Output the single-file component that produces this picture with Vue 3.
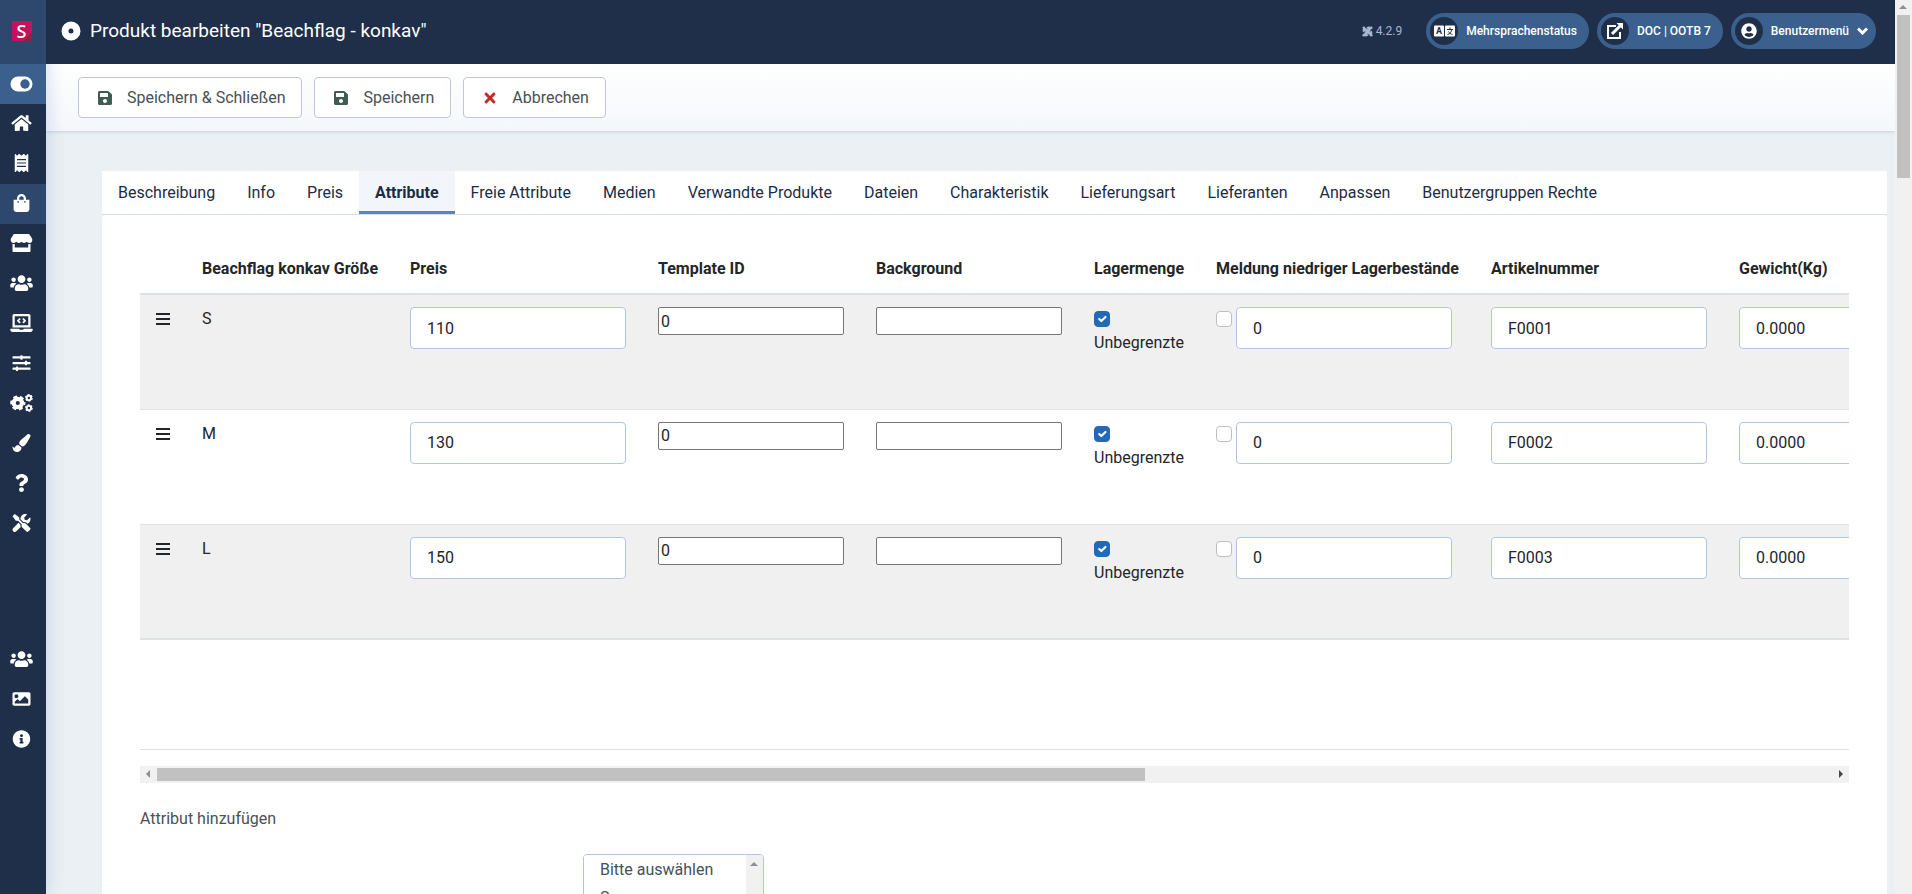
<script setup>
import { ref } from 'vue'

const glyphs = {
  home: ['0 0 576 512', 'M280.37 148.26L96 300.11V464a16 16 0 0 0 16 16l112.06-.29a16 16 0 0 0 15.92-16V368a16 16 0 0 1 16-16h64a16 16 0 0 1 16 16v95.64a16 16 0 0 0 16 16.05L464 480a16 16 0 0 0 16-16V300L295.67 148.26a12.19 12.19 0 0 0-15.3 0zM571.6 251.47L488 182.56V44.05a12 12 0 0 0-12-12h-56a12 12 0 0 0-12 12v72.61L318.47 43a48 48 0 0 0-61 0L4.34 251.47a12 12 0 0 0-1.6 16.9l25.5 31A12 12 0 0 0 45.15 301l235.22-193.74a12.19 12.19 0 0 1 15.3 0L530.9 301a12 12 0 0 0 16.9-1.6l25.5-31a12 12 0 0 0-1.7-16.93z'],
  receipt: ['0 0 384 512', 'M358.4 3.2L320 48 265.6 3.2a15.9 15.9 0 0 0-19.2 0L192 48 137.6 3.2a15.9 15.9 0 0 0-19.2 0L64 48 25.6 3.2C15-4.7 0 2.8 0 16v480c0 13.2 15 20.7 25.6 12.8L64 464l54.4 44.8a15.9 15.9 0 0 0 19.2 0L192 464l54.4 44.8a15.9 15.9 0 0 0 19.2 0L320 464l38.4 44.8c10.5 7.9 25.6.4 25.6-12.8V16c0-13.2-15-20.7-25.6-12.8zM320 360c0 4.4-3.6 8-8 8H72c-4.4 0-8-3.6-8-8v-16c0-4.4 3.6-8 8-8h240c4.4 0 8 3.6 8 8v16zm0-96c0 4.4-3.6 8-8 8H72c-4.4 0-8-3.6-8-8v-16c0-4.4 3.6-8 8-8h240c4.4 0 8 3.6 8 8v16zm0-96c0 4.4-3.6 8-8 8H72c-4.4 0-8-3.6-8-8v-16c0-4.4 3.6-8 8-8h240c4.4 0 8 3.6 8 8v16z'],
  bag: ['0 0 448 512', 'M352 160v-32C352 57.42 294.579 0 224 0 153.42 0 96 57.42 96 128v32H0v272c0 44.183 35.817 80 80 80h288c44.183 0 80-35.817 80-80V160h-96zm-192-32c0-35.29 28.71-64 64-64s64 28.71 64 64v32H160v-32zm160 120c-13.255 0-24-10.745-24-24s10.745-24 24-24 24 10.745 24 24-10.745 24-24 24zm-192 0c-13.255 0-24-10.745-24-24s10.745-24 24-24 24 10.745 24 24-10.745 24-24 24z'],
  store: ['0 0 616 512', 'M602 118.6L537.1 15C531.3 5.7 521 0 510 0H106C95 0 84.7 5.7 78.9 15L14 118.6c-33.5 53.5-3.8 127.9 58.8 136.4 4.5.6 9.1.9 13.7.9 29.6 0 55.8-13 73.8-33.1 18 20.1 44.3 33.1 73.8 33.1 29.6 0 55.8-13 73.8-33.1 18 20.1 44.3 33.1 73.8 33.1 29.6 0 55.8-13 73.8-33.1 18.1 20.1 44.3 33.1 73.8 33.1 4.7 0 9.2-.3 13.7-.9 62.8-8.4 92.6-82.8 59-136.4zM529.5 288c-10 0-19.9-1.5-29.5-3.8V384H116v-99.8c-9.6 2.2-19.5 3.8-29.5 3.8-6 0-12.1-.4-18-1.2-5.6-.8-11.1-2.1-16.4-3.6V480c0 17.7 14.3 32 32 32h448c17.7 0 32-14.3 32-32V283.2c-5.4 1.6-10.8 2.9-16.4 3.6-6.1.8-12.1 1.2-18.2 1.2z'],
  users: ['0 0 640 512', 'M96 224c35.3 0 64-28.7 64-64s-28.7-64-64-64-64 28.7-64 64 28.7 64 64 64zm448 0c35.3 0 64-28.7 64-64s-28.7-64-64-64-64 28.7-64 64 28.7 64 64 64zm32 32h-64c-17.6 0-33.5 7.1-45.1 18.6 40.3 22.1 68.9 62 75.1 109.4h66c17.7 0 32-14.3 32-32v-32c0-35.3-28.7-64-64-64zm-256 0c61.9 0 112-50.1 112-112S381.9 32 320 32 208 82.1 208 144s50.1 112 112 112zm76.8 32h-8.3c-20.8 10-43.9 16-68.5 16s-47.6-6-68.5-16h-8.3C179.6 288 128 339.6 128 403.2V432c0 26.5 21.5 48 48 48h288c26.5 0 48-21.5 48-48v-28.8c0-63.6-51.6-115.2-115.2-115.2zm-223.7-13.4C161.5 263.1 145.6 256 128 256H64c-35.3 0-64 28.7-64 64v32c0 17.7 14.3 32 32 32h65.9c6.3-47.4 34.9-87.3 75.2-109.4z'],
  laptop: ['0 0 640 512', 'M255.03 261.65c6.25 6.25 16.38 6.25 22.63 0l11.31-11.31c6.25-6.25 6.25-16.38 0-22.63L253.25 192l35.71-35.72c6.25-6.25 6.25-16.38 0-22.63l-11.31-11.31c-6.25-6.25-16.38-6.25-22.63 0l-58.34 58.34c-6.25 6.25-6.25 16.38 0 22.63l58.35 58.34zm96.01-11.3l11.31 11.31c6.25 6.25 16.38 6.25 22.63 0l58.34-58.34c6.25-6.25 6.25-16.38 0-22.63l-58.34-58.34c-6.25-6.25-16.38-6.25-22.63 0l-11.31 11.31c-6.25 6.25-6.25 16.38 0 22.63L386.75 192l-35.71 35.72c-6.25 6.25-6.25 16.38 0 22.63zM624 416H381.54c-.74 19.81-14.71 32-32.74 32H288c-18.69 0-33.02-17.47-32.77-32H16c-8.8 0-16 7.2-16 16v16c0 35.2 28.8 64 64 64h512c35.2 0 64-28.8 64-64v-16c0-8.8-7.2-16-16-16zM576 48c0-26.4-21.6-48-48-48H112C85.6 0 64 21.6 64 48v336h512V48zm-64 272H128V64h384v256z'],
  sliders: ['0 0 512 512', 'M496 384H160v-16c0-8.8-7.2-16-16-16h-32c-8.8 0-16 7.2-16 16v16H16c-8.8 0-16 7.2-16 16v32c0 8.8 7.2 16 16 16h80v16c0 8.8 7.2 16 16 16h32c8.8 0 16-7.2 16-16v-16h336c8.8 0 16-7.2 16-16v-32c0-8.8-7.2-16-16-16zm0-160h-80v-16c0-8.8-7.2-16-16-16h-32c-8.8 0-16 7.2-16 16v16H16c-8.8 0-16 7.2-16 16v32c0 8.8 7.2 16 16 16h336v16c0 8.8 7.2 16 16 16h32c8.8 0 16-7.2 16-16v-16h80c8.8 0 16-7.2 16-16v-32c0-8.8-7.2-16-16-16zm0-160H288V48c0-8.8-7.2-16-16-16h-32c-8.8 0-16 7.2-16 16v16H16C7.2 64 0 71.2 0 80v32c0 8.8 7.2 16 16 16h208v16c0 8.8 7.2 16 16 16h32c8.8 0 16-7.2 16-16v-16h208c8.8 0 16-7.2 16-16V80c0-8.8-7.2-16-16-16z'],
  brush: ['0 0 512 512', 'M167.02 309.34c-40.12 2.58-76.53 17.86-97.19 72.3-2.35 6.21-8 9.98-14.59 9.98-11.11 0-45.46-27.67-55.25-34.35C0 439.62 37.93 512 128 512c75.86 0 128-43.77 128-120.19 0-3.11-.65-6.08-.97-9.13l-88.01-73.34zM457.89 0c-15.16 0-29.37 6.71-40.21 16.45C213.27 199.05 192 203.34 192 257.09c0 13.7 3.25 26.76 8.73 38.7l63.82 53.18c7.21 1.8 14.64 3.03 22.39 3.03 62.11 0 98.11-45.47 211.16-256.46 7.38-14.35 13.9-29.85 13.9-45.99C512 20.64 486 0 457.89 0z'],
  question: ['0 0 384 512', 'M202.021 0C122.202 0 70.503 32.703 29.914 91.026c-7.363 10.58-5.093 25.086 5.178 32.874l43.138 32.709c10.373 7.865 25.132 6.026 33.253-4.148 25.049-31.381 43.63-49.449 82.757-49.449 30.764 0 68.816 19.799 68.816 49.631 0 22.552-18.617 34.134-48.993 51.164-35.423 19.86-82.299 44.576-82.299 106.405V320c0 13.255 10.745 24 24 24h72.471c13.255 0 24-10.745 24-24v-5.773c0-42.86 125.268-44.645 125.268-160.627C377.504 66.256 286.902 0 202.021 0zM192 373.459c-38.196 0-69.271 31.075-69.271 69.271 0 38.195 31.075 69.27 69.271 69.27s69.271-31.075 69.271-69.271-31.075-69.27-69.271-69.27z'],
  tools: ['0 0 512 512', 'M501.1 395.7L384 278.6c-23.1-23.1-57.6-27.6-85.4-13.9L192 158.1V96L64 0 0 64l96 128h62.1l106.6 106.6c-13.6 27.8-9.2 62.3 13.9 85.4l117.1 117.1c14.6 14.6 38.2 14.6 52.7 0l52.7-52.7c14.5-14.6 14.5-38.2 0-52.7zM331.7 225c28.3 0 54.9 11 74.9 31l19.4 19.4c15.8-6.9 30.8-16.5 43.8-29.5 37.1-37.1 49.7-89.3 37.9-136.7-2.2-9-13.5-12.1-20.1-5.5l-74.4 74.4-67.9-11.3L334 98.9l74.4-74.4c6.6-6.6 3.4-17.9-5.7-20.2-47.4-11.7-99.6.9-136.6 37.9-28.5 28.5-41.9 66.1-41.2 103.6l82.1 82.1c8.1-1.9 16.5-2.9 24.7-2.9zm-103.9 82l-56.7-56.7L18.7 402.8c-25 25-25 65.5 0 90.5s65.5 25 90.5 0l123.6-123.6c-7.6-19.9-9.9-41.6-5-62.7z'],
  image: ['0 0 512 512', 'M464 448H48c-26.51 0-48-21.49-48-48V112c0-26.51 21.49-48 48-48h416c26.51 0 48 21.49 48 48v288c0 26.51-21.49 48-48 48zM112 120c-30.928 0-56 25.072-56 56s25.072 56 56 56 56-25.072 56-56-25.072-56-56-56zM64 384h384V272l-87.515-87.515c-4.686-4.686-12.284-4.686-16.971 0L208 320l-55.515-55.515c-4.686-4.686-12.284-4.686-16.971 0L64 336v48z'],
  info: ['0 0 512 512', 'M256 8C119.043 8 8 119.083 8 256c0 136.997 111.043 248 248 248s248-111.003 248-248C504 119.083 392.957 8 256 8zm0 110c23.196 0 42 18.804 42 42s-18.804 42-42 42-42-18.804-42-42 18.804-42 42-42zm56 254c0 6.627-5.373 12-12 12h-88c-6.627 0-12-5.373-12-12v-24c0-6.627 5.373-12 12-12h12v-64h-12c-6.627 0-12-5.373-12-12v-24c0-6.627 5.373-12 12-12h64c6.627 0 12 5.373 12 12v100h12c6.627 0 12 5.373 12 12v24z'],
  save: ['0 0 448 512', 'M433.941 129.941l-83.882-83.882A48 48 0 0 0 316.118 32H48C21.49 32 0 53.49 0 80v352c0 26.51 21.49 48 48 48h352c26.51 0 48-21.49 48-48V163.882a48 48 0 0 0-14.059-33.941zM224 416c-35.346 0-64-28.654-64-64 0-35.346 28.654-64 64-64s64 28.654 64 64c0 35.346-28.654 64-64 64zm96-304.52V212c0 6.627-5.373 12-12 12H76c-6.627 0-12-5.373-12-12V108c0-6.627 5.373-12 12-12h228.52c3.183 0 6.235 1.264 8.485 3.515l3.48 3.48A11.996 11.996 0 0 1 320 111.48z'],
  times: ['0 0 352 512', 'M242.72 256l100.07-100.07c12.28-12.28 12.28-32.19 0-44.48l-22.24-22.24c-12.28-12.28-32.19-12.28-44.48 0L176 189.28 75.93 89.21c-12.28-12.28-32.19-12.28-44.48 0L9.21 111.45c-12.28 12.28-12.28 32.19 0 44.48L109.28 256 9.21 356.07c-12.28 12.28-12.28 32.19 0 44.48l22.24 22.24c12.28 12.28 32.2 12.28 44.48 0L176 322.72l100.07 100.07c12.28 12.28 32.2 12.28 44.48 0l22.24-22.24c12.28-12.28 12.28-32.19 0-44.48L242.72 256z'],
  user: ['0 0 496 512', 'M248 8C111 8 0 119 0 256s111 248 248 248 248-111 248-248S385 8 248 8zm0 96c48.6 0 88 39.4 88 88s-39.4 88-88 88-88-39.4-88-88 39.4-88 88-88zm0 344c-58.7 0-111.3-26.6-146.5-68.2 18.8-35.4 55.6-59.8 98.5-59.8 2.4 0 4.8.4 7.1 1.1 13 4.2 26.6 6.9 40.9 6.9 14.3 0 28-2.7 40.9-6.9 2.3-.7 4.7-1.1 7.1-1.1 42.9 0 79.7 24.4 98.5 59.8C359.3 421.4 306.7 448 248 448z'],
}

const menu = [
  { icon: 'toggle', label: 'Menü umschalten', state: 'switch' },
  { icon: 'home', label: 'Startseite' },
  { icon: 'receipt', label: 'Bestellungen' },
  { icon: 'bag', label: 'Produkte', state: 'active' },
  { icon: 'store', label: 'Shop' },
  { icon: 'users', label: 'Kunden' },
  { icon: 'laptop', label: 'Inhalte' },
  { icon: 'sliders', label: 'Optionen' },
  { icon: 'cogs', label: 'Konfiguration' },
  { icon: 'brush', label: 'Gestaltung' },
  { icon: 'question', label: 'Hilfe' },
  { icon: 'tools', label: 'Werkzeuge' },
]
const lowerMenu = [
  { icon: 'users', label: 'Benutzer' },
  { icon: 'image', label: 'Medien' },
  { icon: 'info', label: 'Information' },
]

const tabs = ['Beschreibung', 'Info', 'Preis', 'Attribute', 'Freie Attribute', 'Medien', 'Verwandte Produkte', 'Dateien', 'Charakteristik', 'Lieferungsart', 'Lieferanten', 'Anpassen', 'Benutzergruppen Rechte']
const activeTab = ref('Attribute')

const rows = ref([
  { size: 'S', price: '110', template: '0', background: '', unlimited: true, notify: false, low: '0', sku: 'F0001', weight: '0.0000' },
  { size: 'M', price: '130', template: '0', background: '', unlimited: true, notify: false, low: '0', sku: 'F0002', weight: '0.0000' },
  { size: 'L', price: '150', template: '0', background: '', unlimited: true, notify: false, low: '0', sku: 'F0003', weight: '0.0000' },
])
</script>

<template>
  <div class="page">
    <nav class="sidebar" aria-label="Hauptmenü">
      <a class="logo" href="#" aria-label="Startseite"><span class="logo-mark">S</span></a>
      <a v-for="m in menu" :key="m.label" href="#" class="side-item" :class="m.state" :aria-label="m.label">
        <svg v-if="m.icon === 'toggle'" class="side-icon" viewBox="0 0 23 18">
          <rect x="0.500" y="1.500" width="22" height="15" rx="7.500" fill="#fff" />
          <circle cx="15" cy="9" r="4.700" fill="#3b608e" />
        </svg>
        <svg v-else-if="m.icon === 'cogs'" class="side-icon" viewBox="0 0 640 512" fill="none" stroke="currentColor">
          <circle cx="215" cy="256" r="118" stroke-width="116" />
          <circle cx="215" cy="256" r="186" stroke-width="60" stroke-dasharray="110 84.780" stroke-dashoffset="55" />
          <circle cx="530" cy="112" r="62" stroke-width="56" />
          <circle cx="530" cy="112" r="94" stroke-width="32" stroke-dasharray="56 42.440" />
          <circle cx="530" cy="400" r="62" stroke-width="56" />
          <circle cx="530" cy="400" r="94" stroke-width="32" stroke-dasharray="56 42.440" />
        </svg>
        <svg v-else class="side-icon" :viewBox="glyphs[m.icon][0]" fill="currentColor"><path :d="glyphs[m.icon][1]" /></svg>
      </a>
      <div class="lower">
        <a v-for="m in lowerMenu" :key="m.label" href="#" class="side-item" :aria-label="m.label">
          <svg class="side-icon" :viewBox="glyphs[m.icon][0]" fill="currentColor"><path :d="glyphs[m.icon][1]" /></svg>
        </a>
      </div>
    </nav>

    <div class="main">
      <header class="topbar">
        <h1 class="title">
          <svg class="title-icon" viewBox="0 0 20 20"><circle cx="10" cy="10" r="6" fill="none" stroke="#fff" stroke-width="7" /></svg>
          <span>Produkt bearbeiten "Beachflag - konkav"</span>
        </h1>
        <div class="tools">
          <div class="version">
            <svg class="joomla" viewBox="0 0 24 24" fill="none" stroke="currentColor" stroke-width="4">
              <path d="M5 13C2 10 3 6 6 6c3 0 5 3 12 10M11 5c3-3 7-2 7 1 0 3-3 5-10 12M19 11c3 3 2 7-1 7-3 0-5-3-12-10M13 19c-3 3-7 2-7-1 0-3 3-5 10-12" />
              <g fill="currentColor" stroke="none"><circle cx="4" cy="4" r="3" /><circle cx="20" cy="4" r="3" /><circle cx="4" cy="20" r="3" /><circle cx="20" cy="20" r="3" /></g>
            </svg>
            <span>4.2.9</span>
          </div>
          <button type="button" class="pill">
            <span class="disc">
              <svg class="lang-icon" viewBox="0 0 21 12">
                <rect y="0.500" width="10" height="11" rx="1" fill="#fff" />
                <rect x="11" y="0.500" width="10" height="11" rx="1" fill="#fff" />
                <text x="5" y="9" text-anchor="middle" class="lang-letter">A</text>
                <path d="M13 4.500h6M16 2.500v2M13.500 9.500C16 9 17.500 7 17.500 4.500M14.500 6.500c.5 1.500 2 2.500 4 3" stroke="#1f2f49" fill="none" />
              </svg>
            </span>
            <span>Mehrsprachenstatus</span>
          </button>
          <a href="#" class="pill">
            <span class="disc">
              <svg class="disc-icon" viewBox="0 0 18 18" fill="none" stroke="#fff" stroke-width="2">
                <path d="M10 4H2v12h12v-6" /><path d="M6 12L15 3" stroke-width="3" /><path d="M10.500 1H17v6.500z" fill="#fff" stroke="none" />
              </svg>
            </span>
            <span>DOC | OOTB 7</span>
          </a>
          <button type="button" class="pill user-pill">
            <span class="disc">
              <svg class="user-icon" :viewBox="glyphs.user[0]" fill="#fff"><path :d="glyphs.user[1]" /></svg>
            </span>
            <span>Benutzermenü</span>
            <svg class="chevron" viewBox="0 0 11 8" fill="none" stroke="#fff" stroke-width="3"><path d="M1 1.500L5.500 6 10 1.500" /></svg>
          </button>
        </div>
      </header>

      <div class="toolbar">
        <button type="button" class="action">
          <svg class="action-icon save" :viewBox="glyphs.save[0]"><path :d="glyphs.save[1]" /></svg>
          <span>Speichern &amp; Schließen</span>
        </button>
        <button type="button" class="action">
          <svg class="action-icon save" :viewBox="glyphs.save[0]"><path :d="glyphs.save[1]" /></svg>
          <span>Speichern</span>
        </button>
        <button type="button" class="action">
          <svg class="action-icon cancel" :viewBox="glyphs.times[0]"><path :d="glyphs.times[1]" /></svg>
          <span>Abbrechen</span>
        </button>
      </div>

      <main class="content">
        <div class="tabs" role="tablist">
          <button v-for="t in tabs" :key="t" type="button" role="tab" class="tab" :class="{ current: t === activeTab }" :aria-selected="t === activeTab" @click="activeTab = t">{{ t }}</button>
        </div>
        <section class="panel">
          <div class="table-wrap">
            <table class="grid">
              <colgroup>
                <col class="c-handle"><col class="c-size"><col class="c-field"><col class="c-plain"><col class="c-plain"><col class="c-stock"><col class="c-notify"><col class="c-field"><col class="c-field"><col>
              </colgroup>
              <thead>
                <tr>
                  <th></th><th>Beachflag konkav Größe</th><th>Preis</th><th>Template ID</th><th>Background</th><th>Lagermenge</th><th>Meldung niedriger Lagerbestände</th><th>Artikelnummer</th><th>Gewicht(Kg)</th><th></th>
                </tr>
              </thead>
              <tbody>
                <tr v-for="r in rows" :key="r.size">
                  <td>
                    <svg class="handle" viewBox="0 0 14 12"><path d="M0 1h14M0 6h14M0 11h14" stroke="#22262a" stroke-width="2" /></svg>
                  </td>
                  <td>{{ r.size }}</td>
                  <td><input v-model="r.price" type="text" class="field" aria-label="Preis"></td>
                  <td><input v-model="r.template" type="text" class="plain" aria-label="Template ID"></td>
                  <td><input v-model="r.background" type="text" class="plain" aria-label="Background"></td>
                  <td>
                    <label class="stock"><input v-model="r.unlimited" type="checkbox" class="check"><span>Unbegrenzte</span></label>
                  </td>
                  <td>
                    <div class="notify">
                      <input v-model="r.notify" type="checkbox" class="check" aria-label="Meldung aktiv">
                      <input v-model="r.low" type="text" class="field" aria-label="Meldung niedriger Lagerbestände">
                    </div>
                  </td>
                  <td><input v-model="r.sku" type="text" class="field" aria-label="Artikelnummer"></td>
                  <td><input v-model="r.weight" type="text" class="field" aria-label="Gewicht(Kg)"></td>
                  <td></td>
                </tr>
              </tbody>
              <tfoot>
                <tr><td colspan="10"></td></tr>
              </tfoot>
            </table>
          </div>
          <div class="hscroll" aria-hidden="true">
            <svg class="arrow-h" viewBox="0 0 17 17"><path d="M10 4v8L6 8z" fill="#8b8f9a" /></svg>
            <div class="htrack"><div class="hthumb"></div></div>
            <svg class="arrow-h" viewBox="0 0 17 17"><path d="M7 4v8l4-4z" fill="#4a4548" /></svg>
          </div>

          <h2 class="subhead">Attribut hinzufügen</h2>
          <div class="chooser">
            <select class="options" size="4" aria-label="Beachflag konkav Größe">
              <option>Bitte auswählen</option>
              <option>S</option>
              <option>M</option>
              <option>L</option>
            </select>
            <div class="options-scroll" aria-hidden="true">
              <svg viewBox="0 0 17 17"><path d="M4 11h8L8 7z" fill="#8b8f9a" /></svg>
            </div>
          </div>
        </section>
      </main>
    </div>

    <div class="vscroll" aria-hidden="true">
      <svg class="arrow-v" viewBox="0 0 17 15"><path d="M4 9h8L8 5z" fill="#8b8f9a" /></svg>
      <div class="vthumb"></div>
    </div>
  </div>
</template>

<style>
body {
  margin: 0;
  background: #ebf0f5;
}
</style>

<style scoped>
.page {
  display: flex;
  height: 100vh;
  overflow: hidden;
  font-family: Roboto, "Liberation Sans", sans-serif;
  font-size: 16px;
  line-height: 24px;
  color: #22262a;
}
.page *, .page *::before, .page *::after { box-sizing: border-box; }
button, input, select { font: inherit; color: inherit; margin: 0; }

.sidebar {
  flex: none;
  width: 46px;
  background: #1f2f49;
  box-shadow: 0 0 20px rgba(132, 160, 202, 0.4);
  z-index: 2;
}
.logo {
  display: flex;
  align-items: center;
  justify-content: center;
  height: 64px;
  padding: 0 3px 2px 0;
  background: #2d486c;
  text-decoration: none;
}
.logo-mark {
  width: 20px;
  height: 20px;
  background: linear-gradient(135deg, #c0155b 80%, #8c2340 80%);
  color: #fff;
  font: 500 18px/20px "Noto Sans", sans-serif;
  text-align: center;
}
.side-item {
  display: flex;
  align-items: center;
  justify-content: center;
  height: 40px;
  padding: 0 3px 2px 0;
  color: #fff;
}
.side-item.switch { padding-bottom: 0; background: #3b608e; }
.side-item.active { background: #2d486c; }
.side-icon { height: 18px; width: 23px; }
.lower { margin-top: 96px; }

.main {
  flex: 1;
  min-width: 0;
  display: flex;
  flex-direction: column;
}
.topbar {
  flex: none;
  display: flex;
  align-items: center;
  justify-content: space-between;
  height: 64px;
  padding: 0 19px 2px 15px;
  background: #1f2f49;
  color: #fff;
  z-index: 3;
}
.title {
  display: flex;
  align-items: center;
  gap: 9px;
  margin: 0;
  font-size: 19px;
  font-weight: 400;
  white-space: nowrap;
}
.title-icon { width: 20px; height: 20px; }
.tools { display: flex; align-items: center; gap: 8px; }
.version {
  display: flex;
  align-items: center;
  gap: 3px;
  margin-right: 16px;
  font-size: 12px;
  color: #a4b6d2;
}
.joomla { width: 11px; height: 11px; }
.pill {
  display: flex;
  align-items: center;
  gap: 8px;
  height: 36px;
  padding: 0 12px 0 4px;
  border: 0;
  border-radius: 18px;
  background: #3b608e;
  color: #fff;
  font-size: 12px;
  font-weight: 500;
  text-decoration: none;
  white-space: nowrap;
}
.user-pill { padding-right: 8px; }
.disc {
  display: flex;
  align-items: center;
  justify-content: center;
  width: 28px;
  height: 28px;
  border-radius: 50%;
  background: #1f2f49;
}
.lang-icon { width: 21px; height: 12px; }
.lang-letter { font: 700 9px Roboto, sans-serif; fill: #1f2f49; }
.disc-icon { width: 18px; height: 18px; }
.user-icon { width: 16px; height: 16px; }
.chevron { width: 11px; height: 8px; }

.toolbar {
  flex: none;
  display: flex;
  gap: 12px;
  padding: 13px 32px;
  background: linear-gradient(#fff, #f4f7fb);
  box-shadow: 0 1px 3px rgba(132, 160, 202, 0.4);
}
.action {
  display: flex;
  align-items: center;
  gap: 12px;
  height: 41px;
  padding: 0 16px;
  border: 1px solid #bcc6dc;
  border-radius: 4px;
  background: #fff;
  color: #495057;
  white-space: nowrap;
}
.action-icon { width: 20px; height: 16px; }
.save { fill: #3f5d52; }
.cancel { fill: #c52827; }

.content { padding: 40px 8px 0 56px; }
.tabs {
  display: flex;
  background: #fff;
  border-bottom: 1px solid #d8e0f0;
}
.tab {
  height: 43px;
  padding: 4px 16px 0;
  border: 0;
  border-bottom: 3px solid transparent;
  background: none;
  color: #1c2c46;
  white-space: nowrap;
}
.tab.current {
  font-weight: 700;
  background: #f2f6fa;
  border-bottom-color: #5087c5;
}
.panel {
  padding: 26px 38px 40px;
  background: #fff;
  border-radius: 4px 4px 0 0;
}
.table-wrap { overflow: hidden; }
.grid {
  table-layout: fixed;
  width: 2898px;
  border-collapse: collapse;
}
.c-handle { width: 46px; }
.c-size { width: 208px; }
.c-field { width: 248px; }
.c-plain { width: 218px; }
.c-stock { width: 122px; }
.c-notify { width: 275px; }
.grid th {
  height: 53px;
  padding: 3px 16px 0;
  border-bottom: 2px solid #dee2e6;
  font-weight: 700;
  text-align: left;
  white-space: nowrap;
}
.grid td {
  padding: 12px 16px;
  vertical-align: top;
}
.grid tbody tr { height: 115px; border-bottom: 1px solid #dee2e6; }
.grid tbody tr:nth-child(odd) { background: #f0f0f0; }
.grid tbody tr:last-child { border-bottom: 2px solid #dee2e6; }
.grid tfoot tr { height: 110px; border-bottom: 1px solid #dee2e6; }
.handle { display: block; width: 14px; height: 12px; margin-top: 6px; }
.field {
  display: block;
  width: 216px;
  height: 42px;
  padding: 0 16px;
  border: 1px solid #b2c5e0;
  border-radius: 4px;
  background: #fff;
}
.plain {
  display: block;
  width: 186px;
  height: 28px;
  padding: 1px 2px;
  border: 1px solid #767676;
  border-radius: 2px;
  background: #fff;
}
.stock { display: flex; flex-direction: column; }
.check {
  appearance: none;
  flex: none;
  width: 16px;
  height: 16px;
  margin: 4px 0;
  border: 1px solid #bfbfbf;
  border-radius: 4px;
  background: #fff;
}
.check:checked {
  border-color: #2469b5;
  background: #2469b5 url("data:image/svg+xml,%3Csvg xmlns='http://www.w3.org/2000/svg' viewBox='0 0 20 20'%3E%3Cpath fill='none' stroke='%23fff' stroke-linecap='round' stroke-linejoin='round' stroke-width='3' d='M6 10l3 3 6-6'/%3E%3C/svg%3E") center / 14px no-repeat;
}
.notify { display: flex; gap: 4px; }

.hscroll {
  display: flex;
  height: 17px;
  margin-top: 16px;
  background: #f1f1f1;
}
.arrow-h { flex: none; width: 17px; height: 17px; }
.htrack { flex: 1; padding: 2px 0; }
.hthumb { width: 59%; height: 13px; background: #c1c1c1; }

.subhead {
  margin: 24px 0 23px;
  font-size: 16px;
  font-weight: 400;
  color: #495057;
}
.chooser {
  display: flex;
  width: 181px;
  margin-left: 443px;
  border: 1px solid #b2c5e0;
  border-radius: 4px;
  background: #fff;
  overflow: hidden;
}
.options {
  flex: 1;
  min-width: 0;
  height: 120px;
  padding: 0 0 0 14px;
  border: 0;
  background: #fff;
  color: #495057;
  overflow: hidden;
}
.options option { padding: 5px 2px 4px; }
.options-scroll { width: 17px; background: #f1f1f1; }
.options-scroll svg { display: block; width: 17px; height: 17px; }

.vscroll { flex: none; width: 17px; background: #f1f1f1; }
.arrow-v { display: block; width: 17px; height: 15px; }
.vthumb { width: 13px; height: 163px; margin: 0 auto; background: #c1c1c1; }
</style>
